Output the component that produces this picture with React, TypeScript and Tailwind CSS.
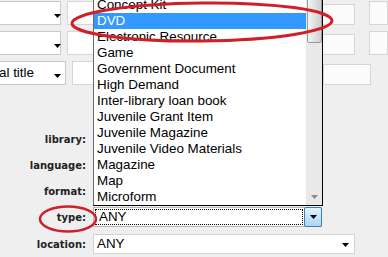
import React from 'react';

const items = [
   'Concept Kit',
   'DVD',
   'Electronic Resource',
   'Game',
   'Government Document',
   'High Demand',
   'Inter-library loan book',
   'Juvenile Grant Item',
   'Juvenile Magazine',
   'Juvenile Video Materials',
   'Magazine',
   'Map',
   'Microform',
];

const Arrow: React.FC<{ className?: string }> = ({ className }) => (
   <svg width="7" height="4" viewBox="0 0 7 4" className={className}>
      <path d="M0 0h7L3.5 4z" fill="#000" />
   </svg>
);

const TopSelect: React.FC<{ text?: string }> = ({ text }) => (
   <div className="relative h-[24px] w-[66px] bg-white border-y border-r border-[#c9c9c9] flex items-center text-[13.4px] text-black">
      <span className="-ml-[1px]">{text}</span>
      <Arrow className="absolute left-[54px] top-[12px]" />
   </div>
);

const Label: React.FC<{ children: React.ReactNode }> = ({ children }) => (
   <div className="w-[86px] text-right font-['DejaVu_Sans',sans-serif] font-bold text-[10px] text-[#222]">
      {children}
   </div>
);

export default function App() {
   return (
      <div className="relative w-[388px] h-[257px] overflow-hidden bg-[#efefef] font-['Liberation_Sans',Arial,sans-serif]">
         {/* top rows */}
         <div className="flex flex-col gap-[6px] pt-[1px]">
            {['', '', 'al title'].map((t, i) => (
               <div key={i} className="flex items-start">
                  <TopSelect text={t} />
                  <div className="ml-[6px] h-[24px] w-[80px] bg-white border border-[#d6d6d6]" />
                  <div className="ml-[171px] mt-[3px] h-[21px] w-[48px] bg-[#fbfbfb] border border-[#d6d6d6]" />
                  {i < 2 && <div className="ml-[14px] h-[24px] w-[20px] bg-[#fbfbfb] border border-[#d6d6d6]" />}
               </div>
            ))}
         </div>

         {/* lower form */}
         <div className="mt-[44px] flex flex-col gap-[6px]">
            {['library:', 'language:', 'format:'].map((l) => (
               <div key={l} className="flex items-center h-[20px]">
                  <Label>{l}</Label>
                  <div className="ml-[7px] h-[20px] w-[200px] bg-white border border-[#c9c9c9]" />
               </div>
            ))}
            <div className="flex items-center h-[20px]">
               <Label>type:</Label>
               <div className="ml-[7px] h-[20px] w-[229px] bg-white border border-[#b8b8b8] flex items-stretch">
                  <div className="flex-1 m-[1px] border border-dotted border-black flex items-center pl-[3px] text-[13.4px]">
                     ANY
                  </div>
                  <div className="w-[18px] -my-[1px] -mr-[1px] rounded-[2px] border border-[#3c7fb1] bg-gradient-to-b from-[#e3f2fc] to-[#a9d6f3] flex items-center justify-center">
                     <Arrow />
                  </div>
               </div>
            </div>
            <div className="flex items-center h-[20px] mt-[1px]">
               <Label>location:</Label>
               <div className="relative ml-[7px] h-[20px] w-[262px] bg-white border border-[#d2d2d2] flex items-center pl-[3px] text-[13.4px]">
                  ANY
                  <Arrow className="absolute right-[5px] top-[8px]" />
               </div>
            </div>
         </div>

         {/* open dropdown list */}
         <div className="absolute left-[93px] top-[-3px] w-[230px] h-[209px] bg-white border border-black border-l-[#6a6a6a] border-t-0 flex">
            <div className="flex-1 flex flex-col pt-0 text-[13.4px] text-black">
               {items.map((it) => (
                  <div
                     key={it}
                     className={`h-[16px] leading-[16px] pl-[3px] whitespace-nowrap ${
                        it === 'DVD' ? 'bg-[#3399ff] text-white' : ''
                     }`}
                  >
                     {it}
                  </div>
               ))}
            </div>
            <div className="relative w-[16px] bg-[#e9e9e9]">
               <div className="absolute left-[1px] right-0 top-0 h-[46px] rounded-b-[2px] border border-[#9a9a9a] bg-gradient-to-r from-[#f4f4f4] to-[#cfcfcf]" />
               <svg width="7" height="4" viewBox="0 0 7 4" className="absolute left-[5px] bottom-[6px]">
                  <path d="M0 0h7L3.5 4z" fill="#8a8a8a" />
               </svg>
            </div>
         </div>

         {/* red annotation marks */}
         <svg className="absolute inset-0 pointer-events-none" width="388" height="257">
            <ellipse cx="202" cy="22" rx="130" ry="19" fill="none" stroke="#d01f28" strokeWidth="3" transform="rotate(-0.6 202 22)" />
            <ellipse cx="68" cy="219" rx="28" ry="12.5" fill="none" stroke="#d01f28" strokeWidth="2.5" />
         </svg>
      </div>
   );
}
